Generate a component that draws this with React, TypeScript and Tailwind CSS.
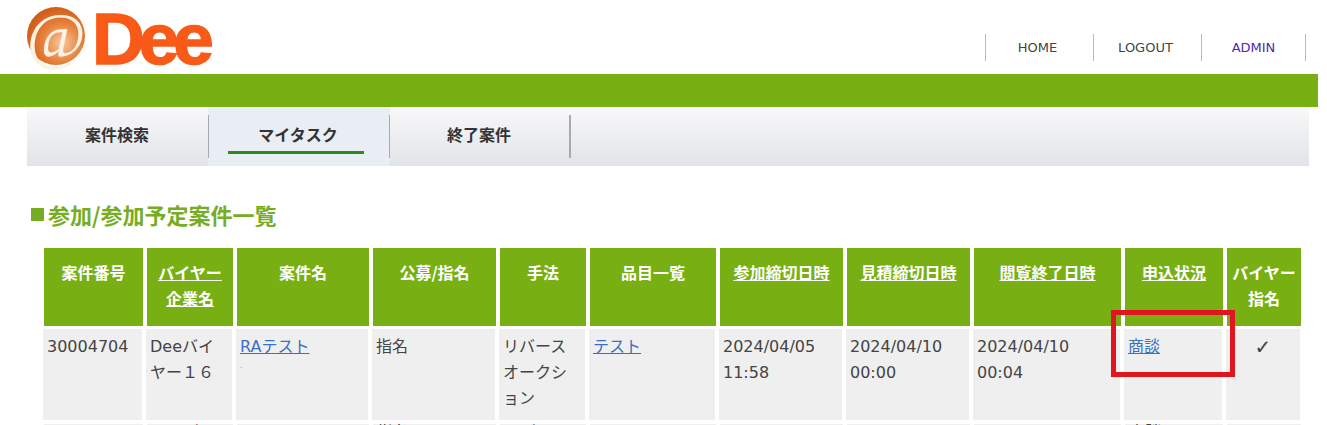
const columns = [
  { width: 'w-[99px]', label: ['案件番号'], link: false },
  { width: 'w-[86px]', label: ['バイヤー', '企業名'], link: true },
  { width: 'w-[132px]', label: ['案件名'], link: false },
  { width: 'w-[123px]', label: ['公募/指名'], link: false },
  { width: 'w-[86px]', label: ['手法'], link: false },
  { width: 'w-[126px]', label: ['品目一覧'], link: false },
  { width: 'w-[123px]', label: ['参加締切日時'], link: true },
  { width: 'w-[123px]', label: ['見積締切日時'], link: true },
  { width: 'w-[147px]', label: ['閲覧終了日時'], link: true },
  { width: 'w-[98px]', label: ['申込状況'], link: true },
  { width: 'w-[74px]', label: ['バイヤー', '指名'], link: false },
];

const row = [
  { text: ['30004704'] },
  { text: ['Deeバイ', 'ヤー１６'] },
  { text: ['RAテスト'], link: true, dot: true },
  { text: ['指名'] },
  { text: ['リバース', 'オークシ', 'ョン'] },
  { text: ['テスト'], link: true },
  { text: ['2024/04/05', '11:58'] },
  { text: ['2024/04/10', '00:00'] },
  { text: ['2024/04/10', '00:04'] },
  { text: ['商談'], link: true },
  { text: ['✓'], center: true },
];

// only the tops of this row's glyphs show at the bottom edge
const nextRow = ['', 'Deeバイ', 'RAテスト', '指名', 'リバース', 'テスト', '', '2024/04/10', '2024/04/10', '商談', ''];

function Logo() {
  return (
    <svg width="190" height="62" viewBox="0 0 190 62" className="block overflow-visible">
      <defs>
        <radialGradient id="ball" cx="0.6" cy="0.62" r="0.68">
          <stop offset="0" stopColor="#f6c9a0" />
          <stop offset="0.5" stopColor="#e6803a" />
          <stop offset="1" stopColor="#cc5610" />
        </radialGradient>
      </defs>
      <circle cx="29" cy="30" r="29" fill="url(#ball)" />
      <text x="29" y="51" textAnchor="middle" fontSize="64" fontStyle="italic" fill="#fdf1e4" fontFamily="'Liberation Serif', serif">@</text>
      <text x="65" y="58" fontSize="73" fontWeight="700" fill="#f95a18" stroke="#f95a18" strokeWidth="1.5" letterSpacing="-6" fontFamily="'Liberation Sans', sans-serif">Dee</text>
    </svg>
  );
}

export default function App() {
  return (
    <div className="w-[1327px] h-[425px] overflow-hidden bg-white text-[#444] font-['DejaVu_Sans','Noto_Sans_CJK_JP',sans-serif]">
      <div className="w-[1318px]">
        {/* Header */}
        <header className="h-[74px] flex justify-between pl-[27px] pr-[12px]">
          <div className="pt-[6px]">
            <Logo />
          </div>
          <nav className="flex items-start pt-[34px] text-[13px]">
            <a className="w-[108px] h-[27px] border-l border-[#bbb] flex items-center justify-center pr-[4px]">HOME</a>
            <a className="w-[108px] h-[27px] border-l border-[#bbb] flex items-center justify-center pr-[4px]">LOGOUT</a>
            <a className="w-[105px] h-[27px] border-x border-[#bbb] flex items-center justify-center text-[#4b2aa8]">ADMIN</a>
          </nav>
        </header>
        <div className="h-[33px] bg-[#78b013]" />

        {/* Tabs */}
        <div className="ml-[27px] w-[1282px] h-[59px] flex bg-gradient-to-b from-[#f8f8f9] to-[#e1e4e8] text-[16px] font-bold font-['Noto_Sans_CJK_JP',sans-serif] text-[#333]">
          <div className="w-[181px] flex justify-center pt-[15px] pr-[1px]">案件検索</div>
          <div className="w-[182px] bg-[#e9eef5] relative flex justify-center pt-[15px] pr-[2px]">
            マイタスク
            <span className="absolute left-[20px] w-[136px] top-[44px] h-[3px] bg-[#2f8a1e]" />
            <span className="absolute left-0 top-[8px] h-[43px] w-px bg-[#a8abae]" />
            <span className="absolute right-0 top-[8px] h-[43px] w-px bg-[#a8abae]" />
          </div>
          <div className="w-[181px] relative flex justify-center pt-[15px] pr-[3px]">
            終了案件
            <span className="absolute right-0 top-[8px] h-[43px] w-[2px] bg-[#a8abae]" />
          </div>
        </div>

        <h1 className="mt-[32px] ml-[31px] h-[32px] text-[22px] leading-[32px] font-bold text-[#76ad22] font-['Noto_Sans_CJK_JP',sans-serif] flex items-center">
          <span className="w-[13px] h-[13px] bg-[#76ad22] mr-[4px]" />
          参加/参加予定案件一覧
        </h1>

        {/* Table */}
        <div className="relative mt-[18px]">
          <div className="flex gap-[4px] pl-[44px]">
            {columns.map((col) => (
              <div key={col.label[0] + col.width} className={`${col.width} h-[78px] shrink-0 bg-[#78b013] pt-[11px] text-center text-white text-[16px] leading-[26px] font-bold font-['Noto_Sans_CJK_JP',sans-serif]`}>
                {col.label.map((line) => (
                  <div key={line} className={col.link ? 'underline' : ''}>{line}</div>
                ))}
              </div>
            ))}
          </div>
          <div className="flex gap-[4px] pl-[43px] mt-[3px]">
            {columns.map((col, i) => (
              <div key={col.label[0] + col.width} className={`${col.width} h-[91px] shrink-0 bg-[#efefef] pt-[5px] px-[4px] text-[16px] leading-[26px] ${row[i].center ? 'text-center' : ''}`}>
                {row[i].text.map((line) => (
                  <div key={line} className={row[i].link ? 'underline text-[#3a6fc4]' : row[i].center ? 'text-[20px] font-bold' : ''}>{line}</div>
                ))}
                {row[i].dot && <div className="text-[8px] leading-[12px] text-[#999]">.</div>}
              </div>
            ))}
          </div>
          <div className="flex gap-[4px] pl-[44px] mt-[4px]">
            {columns.map((col, i) => (
              <div key={col.label[0] + col.width} className={`${col.width} h-[20px] shrink-0 overflow-hidden bg-[#efefef] px-[4px] text-[16px] leading-[26px]`}>
                <div className="-mt-[5px]">{nextRow[i]}</div>
              </div>
            ))}
          </div>
          {/* Red highlight box over the status cell */}
          <div className="absolute left-[1111px] top-[62px] w-[124px] h-[67px] border-[5px] border-[#e0161f]" />
        </div>
      </div>
    </div>
  );
}
